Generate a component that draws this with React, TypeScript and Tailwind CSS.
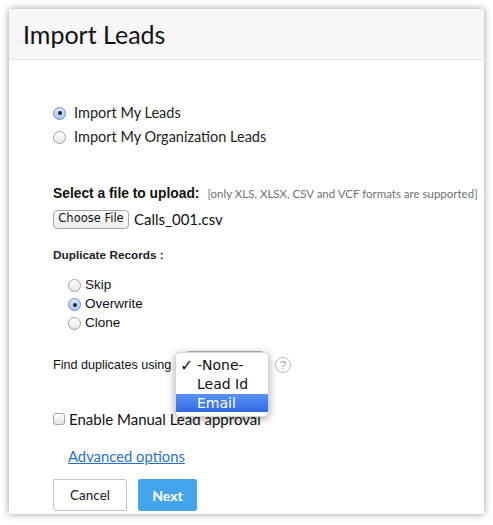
import React from "react";

const lato = { fontFamily: "Lato, 'Open Sans', sans-serif" };
const helv = { fontFamily: "'Liberation Sans', Arial, sans-serif" };
const dejavu = { fontFamily: "'DejaVu Sans', sans-serif" };

function Radio({ checked }: { checked?: boolean }) {
  return checked ? (
    <span className="w-[13px] h-[13px] rounded-full border border-[#6f8fc0] bg-gradient-to-b from-[#d6e6fb] to-[#a9c8f2] flex items-center justify-center shrink-0">
      <span className="w-[4px] h-[4px] rounded-full bg-[#1e2a3a]" />
    </span>
  ) : (
    <span className="w-[13px] h-[13px] rounded-full border border-[#a3a3a3] bg-gradient-to-b from-white to-[#e6e6e6] shrink-0" />
  );
}

export default function App() {
  return (
    <div className="w-[493px] h-[525px] bg-white pt-[9px] pl-[9px]">
      <div className="w-[475px] h-[505px] bg-white shadow-[0_0_7px_rgba(0,0,0,0.4)] flex flex-col">
        <div className="h-[51px] bg-[#f7f7f7] border-b border-[#e6e6e6] flex items-center pl-[14px]">
          <span className="text-[25px] text-[#111] leading-none" style={lato}>Import Leads</span>
        </div>
        <div className="flex flex-col pl-[44px]">
          <div className="mt-[41px] h-6 flex items-center gap-[8px] text-[14.5px] text-[#222]" style={lato}>
            <Radio checked />
            <span>Import My Leads</span>
          </div>
          <div className="h-6 flex items-center gap-[8px] text-[14.5px] text-[#222]" style={lato}>
            <Radio />
            <span>Import My Organization Leads</span>
          </div>
          <div className="mt-[36px] h-[18px] flex items-center whitespace-nowrap">
            <span className="text-[13.8px] font-bold text-[#111]" style={helv}>Select a file to upload:</span>
            <span className="ml-[8px] text-[11.5px] text-[#707070]" style={lato}>[only XLS, XLSX, CSV and VCF formats are supported]</span>
          </div>
          <div className="mt-[6px] h-[20px] flex items-center">
            <span className="w-[76px] h-[19px] rounded-[4px] border border-[#a6a6a6] bg-gradient-to-b from-white to-[#ececec] flex items-center justify-center text-[11.5px] text-[#111]" style={dejavu}>Choose File</span>
            <span className="ml-[5px] text-[15px] text-[#111]" style={lato}>Calls_001.csv</span>
          </div>
          <div className="mt-[18px] h-[18px] flex items-center">
            <span className="text-[11.8px] font-bold text-[#222]" style={helv}>Duplicate Records :</span>
          </div>
          <div className="mt-[11px] flex flex-col pl-[15px] text-[13.5px] text-[#111]" style={helv}>
            <div className="h-[19px] flex items-center gap-[4px]"><Radio /><span>Skip</span></div>
            <div className="h-[19px] flex items-center gap-[4px]"><Radio checked /><span>Overwrite</span></div>
            <div className="h-[19px] flex items-center gap-[4px]"><Radio /><span>Clone</span></div>
          </div>
          <div className="mt-[22px] h-[20px] flex items-center relative">
            <span className="text-[12.6px] text-[#111]" style={helv}>Find duplicates using</span>
            <span className="absolute left-[132px] top-[-4px] w-[80px] h-[22px] rounded-[4px] border border-[#b5b5b5] bg-white" />
            <span className="absolute left-[222px] top-[2px] w-[16px] h-[16px] rounded-full border border-[#bdbdbd] flex items-center justify-center text-[11px] text-[#9a9a9a]" style={helv}>?</span>
            <div className="absolute left-[122px] top-[-3px] w-[94px] h-[65px] rounded-[5px] bg-white shadow-[0_2px_8px_rgba(0,0,0,0.35)] border border-[#d5d5d5] pt-[3px] z-10 text-[14px] text-[#111] overflow-hidden" style={dejavu}>
              <div className="h-[19px] flex items-center relative pl-[21px]">
                <span className="absolute left-[4px] text-[16px] font-bold leading-none">✓</span>
                <span>-None-</span>
              </div>
              <div className="h-[19px] flex items-center pl-[21px]">Lead Id</div>
              <div className="h-[18px] flex items-center pl-[21px] bg-gradient-to-b from-[#5b91f3] to-[#2f6ae6] text-white">Email</div>
            </div>
          </div>
          <div className="mt-[34px] h-[20px] flex items-center gap-[4px]">
            <span className="w-[12px] h-[12px] rounded-[3px] border border-[#a3a3a3] bg-gradient-to-b from-white to-[#e6e6e6]" />
            <span className="text-[15px] text-[#111]" style={lato}>Enable Manual Lead approval</span>
          </div>
          <div className="mt-[17px] h-[20px] flex items-center pl-[15px]">
            <span className="text-[14.8px] text-[#2a72c8] underline" style={lato}>Advanced options</span>
          </div>
          <div className="mt-[13px] flex gap-[11px]">
            <span className="w-[74px] h-[32px] border border-[#c4c4c4] rounded-[2px] bg-white flex items-center justify-center text-[13.5px] text-[#222]" style={lato}>Cancel</span>
            <span className="w-[59px] h-[32px] rounded-[2px] bg-[#45a5ec] flex items-center justify-center text-[14px] font-bold text-white" style={lato}>Next</span>
          </div>
        </div>
      </div>
    </div>
  );
}
